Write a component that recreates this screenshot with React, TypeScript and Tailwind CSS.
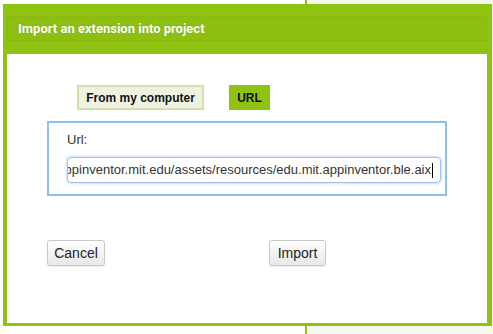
import React from 'react';

const URL_VALUE = 'http://appinventor.mit.edu/assets/resources/edu.mit.appinventor.ble.aix';

const App: React.FC = () => {
  return (
    <div className="relative w-[493px] h-[334px] overflow-hidden" style={{ fontFamily: '"Liberation Sans", Arial, sans-serif' }}>
      {/* page behind the dialog */}
      <div className="flex h-full w-full">
        <div className="w-[305px] bg-white" />
        <div className="w-[2px] bg-[#8fc211]" />
        <div className="flex-1 bg-[#f7f7f2]" />
      </div>

      {/* dialog */}
      <div className="absolute left-[3px] top-[4px] w-[489px] h-[322px] flex flex-col bg-[#8fc211] pl-[4px] pr-[5px] pb-[3px] pt-[12px]">
        <div className="h-[25px] flex items-center pl-[10px] bg-[#8dbf10] border border-[#89b90f]">
          <span className="text-white text-[13px] font-bold [text-shadow:0_0_1px_rgba(0,0,0,0.2)]" style={{ fontFamily: 'Roboto, "Liberation Sans", sans-serif' }}>
            Import an extension into project
          </span>
        </div>

        <div className="mt-[13px] flex-1 bg-white flex flex-col">
          {/* source tabs */}
          <div className="flex gap-[25px] pl-[70px] pt-[31px]">
            <button className="w-[127px] h-[25px] bg-[#eef2e3] border-2 border-[#d5e0a7] text-[12px] font-bold text-[#111] leading-none">
              From my computer
            </button>
            <button className="w-[41px] h-[25px] bg-[#8fc211] text-[12px] font-bold text-[#111] leading-none">
              URL
            </button>
          </div>

          {/* url panel */}
          <div className="ml-[40px] mt-[11px] w-[400px] h-[75px] border-2 border-[#90bfef] pl-[18px] pr-[4px] pt-[9px]">
            <div className="text-[13px] text-[#333] leading-[16px]">Url:</div>
            <div className="mt-[9px] h-[26px] w-[374px] rounded-[4px] border border-[#9cc3ec] shadow-[0_0_3px_rgba(90,150,230,0.6)] flex items-center justify-end overflow-hidden pr-[7px]">
              <span className="whitespace-nowrap text-[13px] text-[#333]">{URL_VALUE}</span>
              <span className="ml-[1px] w-[1px] h-[15px] bg-black shrink-0" />
            </div>
          </div>

          {/* actions */}
          <div className="flex pl-[40px] mt-[44px]">
            <button className="w-[58px] h-[26px] rounded-[3px] border border-[#c9c9c9] bg-gradient-to-b from-white to-[#e8e8e8] text-[14px] text-[#222] shadow-[0_1px_1px_rgba(0,0,0,0.08)]">
              Cancel
            </button>
            <button className="ml-[164px] w-[57px] h-[26px] rounded-[3px] border border-[#c9c9c9] bg-gradient-to-b from-white to-[#e8e8e8] text-[14px] text-[#222] shadow-[0_1px_1px_rgba(0,0,0,0.08)]">
              Import
            </button>
          </div>
        </div>
      </div>
    </div>
  );
};

export default App;
